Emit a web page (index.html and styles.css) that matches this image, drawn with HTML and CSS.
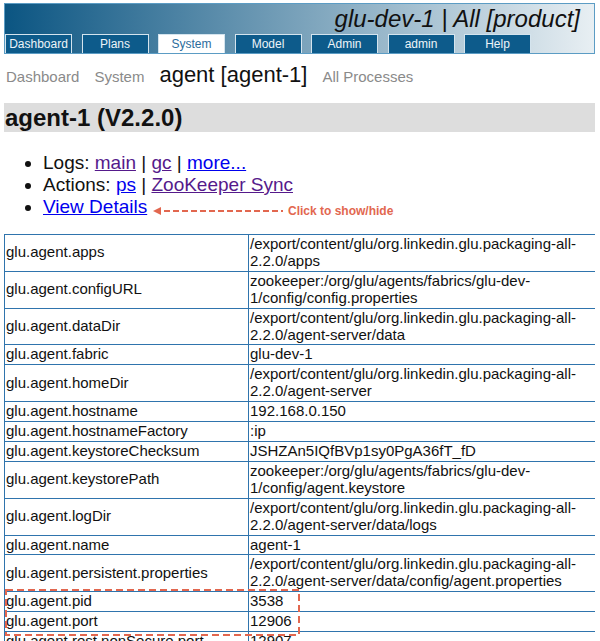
FILE: index.html
```html
<!DOCTYPE html>
<html lang="en">
<head>
<meta charset="utf-8">
<title>agent-1</title>
<link rel="stylesheet" href="styles.css">
</head>
<body>
<div class="header">
  <div class="title">glu-dev-1 | All [product]</div>
  <ul class="tabs">
    <li class="tab">Dashboard</li>
    <li class="tab">Plans</li>
    <li class="tab active">System</li>
    <li class="tab">Model</li>
    <li class="tab">Admin</li>
    <li class="tab">admin</li>
    <li class="tab">Help</li>
  </ul>
</div>

<div class="crumbs">
  <a class="crumb" href="#">Dashboard</a>
  <a class="crumb" href="#">System</a>
  <span class="crumb current">agent [agent-1]</span>
  <a class="crumb" href="#">All Processes</a>
</div>

<h1 class="page-title">agent-1 (V2.2.0)</h1>

<ul class="actions">
  <li>Logs: <a class="visited" href="#">main</a> | <a class="visited" href="#">gc</a> | <a class="link" href="#">more...</a></li>
  <li>Actions: <a class="link" href="#">ps</a> | <a class="visited" href="#">ZooKeeper Sync</a></li>
  <li><a class="link" href="#">View Details</a></li>
</ul>

<table class="details">
  <colgroup><col class="col-key"><col class="col-val"></colgroup>
  <tr><td>glu.agent.apps</td><td>/export/content/glu/org.linkedin.glu.packaging-all-2.2.0/apps</td></tr>
  <tr><td>glu.agent.configURL</td><td>zookeeper:/org/glu/agents/fabrics/glu-dev-1/config/config.properties</td></tr>
  <tr><td>glu.agent.dataDir</td><td>/export/content/glu/org.linkedin.glu.packaging-all-2.2.0/agent-server/data</td></tr>
  <tr><td>glu.agent.fabric</td><td>glu-dev-1</td></tr>
  <tr><td>glu.agent.homeDir</td><td>/export/content/glu/org.linkedin.glu.packaging-all-2.2.0/agent-server</td></tr>
  <tr><td>glu.agent.hostname</td><td>192.168.0.150</td></tr>
  <tr><td>glu.agent.hostnameFactory</td><td>:ip</td></tr>
  <tr><td>glu.agent.keystoreChecksum</td><td>JSHZAn5IQfBVp1sy0PgA36fT_fD</td></tr>
  <tr><td>glu.agent.keystorePath</td><td>zookeeper:/org/glu/agents/fabrics/glu-dev-1/config/agent.keystore</td></tr>
  <tr><td>glu.agent.logDir</td><td>/export/content/glu/org.linkedin.glu.packaging-all-2.2.0/agent-server/data/logs</td></tr>
  <tr><td>glu.agent.name</td><td>agent-1</td></tr>
  <tr><td>glu.agent.persistent.properties</td><td>/export/content/glu/org.linkedin.glu.packaging-all-2.2.0/agent-server/data/config/agent.properties</td></tr>
  <tr><td>glu.agent.pid</td><td>3538</td></tr>
  <tr><td>glu.agent.port</td><td>12906</td></tr>
  <tr><td>glu.agent.rest.nonSecure.port</td><td>12907</td></tr>
</table>

<div class="hint">
  <svg class="hint-arrow" width="130" height="10" viewBox="0 0 130 10" aria-hidden="true">
    <polygon points="0,5 8,1 8,9" fill="#e2674f"/>
    <line x1="11" y1="5" x2="130" y2="5" stroke="#e2674f" stroke-width="2" stroke-dasharray="6 3"/>
  </svg>
  <span class="hint-text">Click to show/hide</span>
</div>

<div class="focus">
  <svg width="295" height="47" viewBox="0 0 295 47" aria-hidden="true">
    <rect x="1" y="1" width="293" height="45" fill="none" stroke="#e2674f" stroke-width="2" stroke-dasharray="7 4"/>
  </svg>
</div>
</body>
</html>
```

FILE: styles.css
```css
html, body {
  background: #ffffff;
}

body {
  margin: 3px 5px 0 4px;
  font-family: "Liberation Sans", Arial, Helvetica, sans-serif;
  color: #111111;
}

/* ---------- header ---------- */
.header {
  width: 589px;
  border: 1px solid #5b9cc4;
  background: linear-gradient(to right, #0b5582 0%, #e8eff3 100%);
}

.title {
  height: 30px;
  line-height: 30px;
  padding-right: 14px;
  text-align: right;
  font-size: 24px;
  font-style: italic;
  color: #111111;
}

.tabs {
  display: flex;
  gap: 9.5px;
  height: 19px;
  margin: 0;
  padding: 0;
  list-style: none;
}

.tab {
  box-sizing: border-box;
  width: 67px;
  height: 19px;
  border: 1px solid #d4e4ee;
  border-bottom: 0;
  background: #0d5b8b;
  color: #eef4f8;
  font-size: 12px;
  line-height: 18px;
  text-align: center;
}

.tab.active {
  background: #ffffff;
  color: #2b6c9c;
}

/* ---------- breadcrumbs ---------- */
.crumbs {
  display: flex;
  align-items: baseline;
  gap: 15px;
  margin: 8px 0 0 2px;
}

.crumb {
  font-size: 15px;
  color: #8a8a8a;
  text-decoration: none;
}

.crumb.current {
  font-size: 22px;
  color: #111111;
}

/* ---------- heading ---------- */
.page-title {
  margin: 15px -5px 20px 0;
  padding-left: 1px;
  background: #dddddd;
  font-size: 24px;
  font-weight: bold;
  line-height: 29px;
  color: #111111;
}

/* ---------- actions list ---------- */
.actions {
  margin: 0 0 16px;
  padding-left: 39px;
  font-size: 19px;
  line-height: normal;
}

.link {
  color: #0000ee;
}

.visited {
  color: #551a8b;
}

/* ---------- details table ---------- */
.details {
  width: 591px;
  border-collapse: collapse;
  table-layout: fixed;
  font-size: 15px;
  line-height: 16.9px;
  color: #111111;
}

.col-key {
  width: 244px;
}

.col-val {
  width: 347px;
}

.details td {
  border: 1px solid #2f74ad;
  padding: 1px 2px 1px 1px;
  vertical-align: middle;
}

/* ---------- annotations (overlay) ---------- */
.hint {
  position: absolute;
  left: 153px;
  top: 204px;
  display: flex;
  align-items: center;
  gap: 5px;
}

.hint-arrow {
  display: block;
}

.hint-text {
  font-size: 12px;
  font-weight: bold;
  color: #e2674f;
  white-space: nowrap;
}

.focus {
  position: absolute;
  left: 5px;
  top: 589px;
  width: 295px;
  height: 47px;
}

.focus svg {
  display: block;
}
```
